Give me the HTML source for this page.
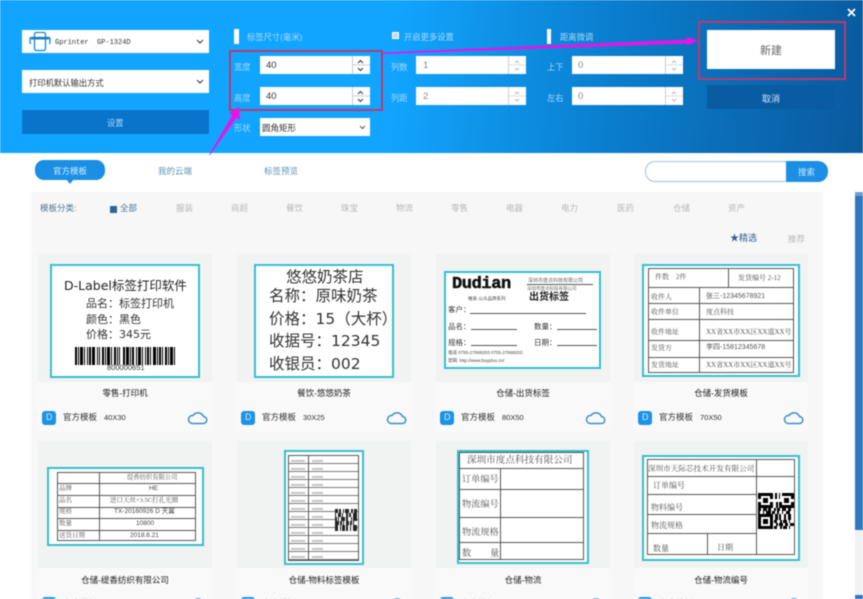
<!DOCTYPE html>
<html><head><meta charset="utf-8">
<style>
html,body{margin:0;padding:0;background:#fff}
#r{position:relative;width:863px;height:599px;overflow:hidden;background:#fff;font-family:"Liberation Sans","Noto Sans CJK SC",sans-serif;color:#333;filter:blur(.45px)}
#r div,#r svg{position:absolute;box-sizing:border-box}
.t{white-space:nowrap;line-height:1}
.hd{left:0;top:0;width:863px;height:153px;background:linear-gradient(94deg,#12a5ff 0%,#12a5ff 45%,#0a7ccb 72%,#0a5a9e 100%)}
.w{background:#fff}
.lb{color:#a6dafa;font-size:8.300px}
.sp{width:1px;background:#ccc}
.card{width:174px;background:#f9f9f9}
.im{left:0;top:0;width:174px;background:#f1f2f2}
.cap{width:174px;text-align:center;font-size:8.500px;color:#222}
.lbl{background:#fff;border:2px solid #35bfcf;overflow:hidden;color:#222}
.cat{font-size:8.500px;color:#b8b8b8;top:204px}
.ln{background:#555}
.dv{font-family:"DejaVu Sans","Noto Sans CJK SC",sans-serif}
.se{font-family:"Liberation Serif","Noto Serif CJK SC",serif;color:#555}
.ft{font-size:8.500px}
.ft span{font-size:7.500px;margin-left:7px}
.ic{width:14px;height:14px;border-radius:3px;background:#1d93e6}
</style></head><body>
<div id="r">
<div class="hd"></div>
<div class="w" style="left:22px;top:30px;width:187px;height:23px"></div>
<svg style="left:29px;top:31px" width="22" height="21" viewBox="0 0 22 21"><path d="M5.500 6V3.500Q5.500 1.500 7.500 1.500H14.500Q16.500 1.500 16.500 3.500V6" fill="none" stroke="#2b7fb8" stroke-width="1.300"/><path d="M2 12.500Q1 12.500 1 11V8Q1 6.500 2.500 6.500H19.500Q21 6.500 21 8V11Q21 12.500 20 12.500" fill="none" stroke="#2396e0" stroke-width="1.500"/><rect x="2" y="6" width="18" height="2.500" fill="#1f7fc0"/><path d="M5.500 8.500V17Q5.500 19.500 8 19.500H14Q16.500 19.500 16.500 17V8.500" fill="none" stroke="#2396e0" stroke-width="1.500"/></svg>
<div class="t" style="left:55px;top:39px;font:7px 'Liberation Mono',monospace;color:#333">Gprinter&nbsp;&nbsp;GP-1324D</div>
<svg style="left:196px;top:39px" width="8" height="6"><path d="M1 1l3 3 3-3" fill="none" stroke="#444" stroke-width="1.200"/></svg>
<div class="w" style="left:22px;top:70px;width:187px;height:23px"></div>
<div class="t" style="left:29px;top:79px;font-size:8.300px">打印机默认输出方式</div>
<svg style="left:196px;top:79px" width="8" height="6"><path d="M1 1l3 3 3-3" fill="none" stroke="#444" stroke-width="1.200"/></svg>
<div style="left:22px;top:110px;width:187px;height:24px;background:#0a74cb"></div>
<div class="t" style="left:107px;top:119px;font-size:8.300px;color:#a9d8f8">设置</div>

<div class="w" style="left:234px;top:29px;width:5px;height:15px"></div>
<div class="t lb" style="left:247px;top:33px">标签尺寸(毫米)</div>
<div style="left:392px;top:32px;width:7px;height:7px;background:#cfd8de;border:1px solid #fff"></div>
<div class="t lb" style="left:404px;top:33px">开启更多设置</div>
<div class="w" style="left:547px;top:29px;width:4px;height:15px"></div>
<div class="t lb" style="left:560px;top:33px">距离微调</div>

<div class="t lb" style="left:234px;top:63px">宽度</div>
<div class="t lb" style="left:234px;top:94px">高度</div>
<div class="t lb" style="left:234px;top:124px">形状</div>
<div class="w" style="left:260px;top:56px;width:110px;height:18px"></div>
<div class="t" style="left:266px;top:61px;font-size:9.500px">40</div>
<div class="sp" style="left:352px;top:56px;height:18px"></div>
<div class="w" style="left:260px;top:87px;width:110px;height:18px"></div>
<div class="t" style="left:266px;top:92px;font-size:9.500px">40</div>
<div class="sp" style="left:352px;top:87px;height:18px"></div>
<svg style="left:353px;top:56px" width="17" height="49"><path d="M5 7l2.500-2.500L10 7M5 12l2.500 2.500L10 12M5 38l2.500-2.500L10 38M5 43l2.500 2.500L10 43" fill="none" stroke="#333" stroke-width="1"/><path d="M0 9h17M0 40h17" stroke="#ccc"/></svg>
<div class="w" style="left:260px;top:118px;width:110px;height:18px"></div>
<div class="t" style="left:262px;top:124px;font-size:8.500px">圆角矩形</div>
<svg style="left:359px;top:125px" width="7" height="5"><path d="M1 1l2.500 2.500L6 1" fill="none" stroke="#555"/></svg>

<div class="t lb" style="left:391px;top:63px">列数</div>
<div class="t lb" style="left:391px;top:94px">列距</div>
<div class="w" style="left:416px;top:56px;width:110px;height:18px"></div>
<div class="t" style="left:423px;top:61px;font-size:9.500px;color:#888">1</div>
<div class="sp" style="left:508px;top:56px;height:18px"></div>
<div class="w" style="left:416px;top:87px;width:110px;height:18px"></div>
<div class="t" style="left:423px;top:92px;font-size:9.500px;color:#888">2</div>
<div class="sp" style="left:508px;top:87px;height:18px"></div>
<svg style="left:509px;top:56px" width="17" height="49"><path d="M6 7l2-2 2 2M6 12l2 2 2-2M6 38l2-2 2 2M6 43l2 2 2-2" fill="none" stroke="#bbb"/><path d="M0 9h17M0 40h17" stroke="#ddd"/></svg>

<div class="t lb" style="left:547px;top:63px">上下</div>
<div class="t lb" style="left:547px;top:94px">左右</div>
<div class="w" style="left:572px;top:56px;width:111px;height:18px"></div>
<div class="t" style="left:578px;top:61px;font-size:9.500px;color:#888">0</div>
<div class="sp" style="left:665px;top:56px;height:18px"></div>
<div class="w" style="left:572px;top:87px;width:111px;height:18px"></div>
<div class="t" style="left:578px;top:92px;font-size:9.500px;color:#888">0</div>
<div class="sp" style="left:665px;top:87px;height:18px"></div>
<svg style="left:666px;top:56px" width="17" height="49"><path d="M6 7l2-2 2 2M6 12l2 2 2-2M6 38l2-2 2 2M6 43l2 2 2-2" fill="none" stroke="#bbb"/><path d="M0 9h17M0 40h17" stroke="#ddd"/></svg>

<div class="w" style="left:707px;top:30px;width:128px;height:39px"></div>
<div class="t" style="left:760px;top:46px;font-size:11px;color:#666">新建</div>
<div style="left:707px;top:85px;width:128px;height:24px;background:#0a5ca2"></div>
<div class="t" style="left:762px;top:95px;font-size:9px;color:#cfe4f5">取消</div>
<svg style="left:846px;top:7px" width="12" height="12"><path d="M2 2l7 7M9 2l-7 7" stroke="#fff" stroke-width="1.800" fill="none"/></svg>

<div style="left:229px;top:50px;width:154px;height:61px;border:2px solid #b83a72"></div>
<div style="left:698px;top:21px;width:148px;height:59px;border:2px solid #b83a6c"></div>

<svg style="left:200px;top:30px" width="510" height="130" viewBox="200 30 510 130"><path d="M383 52.500L687 39.500V36.500L698 41 687 45.500V43.500L383 54Z" fill="#e615e6"/><path d="M209 155L232 115.500 229 113 239 107 240 120 236.500 118 210 155Z" fill="#e615e6"/></svg>

<div style="left:35px;top:160px;width:70px;height:20px;border-radius:9px;background:#1a8fe3"></div>
<div style="left:66px;top:179px;width:8px;height:5px;background:#1a8fe3;clip-path:polygon(0 0,100% 0,50% 100%)"></div>
<div class="t" style="left:53px;top:167px;font-size:8.500px;color:#d3ecfd">官方模板</div>
<div class="t" style="left:158px;top:167px;font-size:8.500px;color:#5f93b8">我的云端</div>
<div class="t" style="left:264px;top:167px;font-size:8.500px;color:#5f93b8">标签预览</div>
<div style="left:645px;top:161px;width:142px;height:21px;border:1px solid #9fc0d2;border-right:0;border-radius:10px 0 0 10px;background:#fff"></div>
<div style="left:786px;top:161px;width:42px;height:21px;border-radius:0 10px 10px 0;background:#1a8fe3"></div>
<div class="t" style="left:798px;top:168px;font-size:8.500px;color:#d3ecfd">搜索</div>

<div style="left:31px;top:192px;width:792px;height:407px;background:#f7f7f7"></div>
<div style="left:855px;top:192px;width:8px;height:4px;background:#6aa3d8"></div>
<div style="left:855px;top:196px;width:8px;height:334px;background:#2f78c0"></div>
<div style="left:855px;top:530px;width:8px;height:65px;background:#f2f2f2"></div>
<div style="left:855px;top:595px;width:8px;height:4px;background:#2f78c0"></div>

<div class="t" style="left:40px;top:204px;font-size:8.500px;color:#4e7590">模板分类:</div>
<div style="left:110px;top:206px;width:7px;height:7px;background:#2d6596"></div>
<div class="t" style="left:120px;top:204px;font-size:8.500px;color:#4e7590">全部</div>
<div class="t cat" style="left:176px">服装</div>
<div class="t cat" style="left:231px">商超</div>
<div class="t cat" style="left:286px">餐饮</div>
<div class="t cat" style="left:341px">珠宝</div>
<div class="t cat" style="left:396px">物流</div>
<div class="t cat" style="left:451px">零售</div>
<div class="t cat" style="left:506px">电器</div>
<div class="t cat" style="left:561px">电力</div>
<div class="t cat" style="left:617px">医药</div>
<div class="t cat" style="left:673px">仓储</div>
<div class="t cat" style="left:728px">资产</div>
<div class="t" style="left:730px;top:234px;font-size:9px;color:#2d5f92">★精选</div>
<div class="t" style="left:788px;top:235px;font-size:8.500px;color:#b8b8b8">推荐</div>

<!-- cards row 1 -->
<div class="card" style="left:38px;top:254px;height:178px"><div class="im" style="height:128px"></div></div>
<div class="card" style="left:237px;top:254px;height:178px"><div class="im" style="height:128px"></div></div>
<div class="card" style="left:436px;top:254px;height:178px"><div class="im" style="height:128px"></div></div>
<div class="card" style="left:634px;top:254px;height:178px"><div class="im" style="height:128px"></div></div>
<!-- cards row 2 -->
<div class="card" style="left:38px;top:441px;height:158px"><div class="im" style="height:127px"></div></div>
<div class="card" style="left:237px;top:441px;height:158px"><div class="im" style="height:127px"></div></div>
<div class="card" style="left:436px;top:441px;height:158px"><div class="im" style="height:127px"></div></div>
<div class="card" style="left:634px;top:441px;height:158px"><div class="im" style="height:127px"></div></div>

<!-- label 1 -->
<div class="lbl" style="left:50px;top:264px;width:150px;height:114px"></div>
<div class="t dv" style="left:64px;top:280px;font-size:12.500px;color:#222">D-Label标签打印软件</div>
<div class="t dv" style="left:86px;top:298px;font-size:11px">品名：标签打印机</div>
<div class="t dv" style="left:86px;top:314px;font-size:11px">颜色：黑色</div>
<div class="t dv" style="left:86px;top:329px;font-size:11px">价格：345元</div>
<svg style="left:75px;top:347px" width="102" height="18"><path d="M0 9H102" stroke="#000" stroke-width="18" stroke-dasharray="2 1 1 1 3 1 1 2 1 1 2 1 3 2 1 1 1 2 2 1 1 1 3 1 1 2 2 1 1 1 1 3 2 1 3 1 1 1 2 2 1 1 3 1 1 2 1 1 2 1 1 2 3 1 1 1 2 1 1 2"/></svg>
<div class="t" style="left:107px;top:364px;font-size:7.500px;color:#333">800000651</div>

<!-- label 2 -->
<div class="lbl" style="left:254px;top:264px;width:140px;height:114px"></div>
<div class="t dv" style="left:286px;top:270px;font-size:15.500px">悠悠奶茶店</div>
<div class="t dv" style="left:269px;top:289px;font-size:15.500px">名称：原味奶茶</div>
<div class="t dv" style="left:269px;top:312px;font-size:15.500px">价格：15（大杯）</div>
<div class="t dv" style="left:269px;top:334px;font-size:15.500px">收据号：12345</div>
<div class="t dv" style="left:269px;top:357px;font-size:15.500px">收银员：002</div>

<!-- label 3 -->
<div class="lbl" style="left:444px;top:271px;width:157px;height:98px"></div>
<div class="t" style="left:452px;top:275px;font:bold 17px 'Liberation Mono',monospace;color:#111;letter-spacing:-.4px;-webkit-text-stroke:.5px #111">Dudian</div>
<div class="t" style="left:468px;top:297px;font-size:4.500px;color:#444">唯美·公众品牌系列</div>
<div class="t" style="left:528px;top:279px;font-size:5px;color:#666">深圳市度点科技有限公司</div>
<div class="ln" style="left:527px;top:284px;width:66px;height:1px"></div>
<div class="t" style="left:527px;top:287px;font-size:4.500px;color:#666">深圳市度点科技有限公司</div>
<div class="t" style="left:529px;top:293px;font-size:10px;font-weight:bold;color:#222">出货标签</div>
<div class="t" style="left:448px;top:306px;font-size:7.500px">客户：</div>
<div class="ln" style="left:470px;top:313px;width:116px;height:1px"></div>
<div class="t" style="left:448px;top:323px;font-size:7.500px">品名：</div>
<div class="ln" style="left:471px;top:329px;width:46px;height:1px"></div>
<div class="t" style="left:534px;top:323px;font-size:7.500px">数量：</div>
<div class="ln" style="left:557px;top:329px;width:40px;height:1px"></div>
<div class="t" style="left:448px;top:339px;font-size:7.500px">规格：</div>
<div class="ln" style="left:471px;top:345px;width:46px;height:1px"></div>
<div class="t" style="left:534px;top:339px;font-size:7.500px">日期：</div>
<div class="ln" style="left:557px;top:345px;width:40px;height:1px"></div>
<div class="t" style="left:448px;top:351px;font-size:4.500px;color:#444">电话 0755-27668203 0755-27668203</div>
<div class="t" style="left:448px;top:359px;font-size:4.500px;color:#444">官网: http://www.buyplus.cn/</div>

<!-- label 4 -->
<div class="lbl" style="left:642px;top:264px;width:158px;height:113px"></div>
<div style="left:648px;top:268px;width:146px;height:105px;border:1px solid #555"></div>
<div class="ln" style="left:648px;top:287px;width:146px;height:1px"></div>
<div class="ln" style="left:648px;top:303px;width:146px;height:1px"></div>
<div class="ln" style="left:648px;top:319px;width:146px;height:1px"></div>
<div class="ln" style="left:648px;top:340px;width:146px;height:1px"></div>
<div class="ln" style="left:648px;top:357px;width:146px;height:1px"></div>
<div class="ln" style="left:728px;top:268px;width:1px;height:19px"></div>
<div class="ln" style="left:699px;top:287px;width:1px;height:86px"></div>
<div class="t se" style="left:655px;top:274px;font-size:7px">件数&nbsp;&nbsp;&nbsp;&nbsp;2件</div>
<div class="t se" style="left:738px;top:275px;font-size:7px">发货编号 2-12</div>
<div class="t se" style="left:651px;top:294px;font-size:7px">收件人</div>
<div class="t" style="left:706px;top:293px;font-size:7px;color:#555">张三-12345678921</div>
<div class="t se" style="left:651px;top:309px;font-size:7px">收件单位</div>
<div class="t se" style="left:706px;top:309px;font-size:7px">度点科技</div>
<div class="t se" style="left:651px;top:329px;font-size:7px">收件地址</div>
<div class="t se" style="left:706px;top:329px;font-size:7px">XX省XX市XX区XX道XX号</div>
<div class="t se" style="left:651px;top:345px;font-size:7px">发货方</div>
<div class="t" style="left:706px;top:344px;font-size:7px;color:#555">李四-15812345678</div>
<div class="t se" style="left:651px;top:362px;font-size:7px">发货地址</div>
<div class="t se" style="left:706px;top:362px;font-size:7px">XX省XX市XX区XX道XX号</div>

<!-- captions row 1 -->
<div class="t cap" style="left:38px;top:389px">零售-打印机</div>
<div class="t cap" style="left:237px;top:389px">餐饮-悠悠奶茶</div>
<div class="t cap" style="left:436px;top:389px">仓储-出货标签</div>
<div class="t cap" style="left:634px;top:389px">仓储-发货模板</div>
<!-- footers row 1 -->
<div class="ic" style="left:42px;top:411px"></div>
<div class="ic" style="left:241px;top:411px"></div>
<div class="ic" style="left:440px;top:411px"></div>
<div class="ic" style="left:638px;top:411px"></div>
<div class="t" style="left:46px;top:413px;font-size:9px;color:#cfe9fb">D</div>
<div class="t" style="left:245px;top:413px;font-size:9px;color:#cfe9fb">D</div>
<div class="t" style="left:444px;top:413px;font-size:9px;color:#cfe9fb">D</div>
<div class="t" style="left:642px;top:413px;font-size:9px;color:#cfe9fb">D</div>
<div class="t ft" style="left:63px;top:413px">官方模板<span>40X30</span></div>
<div class="t ft" style="left:262px;top:413px">官方模板<span>30X25</span></div>
<div class="t ft" style="left:461px;top:413px">官方模板<span>80X50</span></div>
<div class="t ft" style="left:659px;top:413px">官方模板<span>70X50</span></div>
<svg style="left:187px;top:410px" width="21" height="15" viewBox="0 0 21 15"><path d="M5 13.500h11a3.500 3.500 0 0 0 .5-7A6 6 0 0 0 6 5.500a4 4 0 0 0-1 8z" fill="none" stroke="#3a8fc8" stroke-width="1.500"/></svg>
<svg style="left:386px;top:410px" width="21" height="15" viewBox="0 0 21 15"><path d="M5 13.500h11a3.500 3.500 0 0 0 .5-7A6 6 0 0 0 6 5.500a4 4 0 0 0-1 8z" fill="none" stroke="#3a8fc8" stroke-width="1.500"/></svg>
<svg style="left:585px;top:410px" width="21" height="15" viewBox="0 0 21 15"><path d="M5 13.500h11a3.500 3.500 0 0 0 .5-7A6 6 0 0 0 6 5.500a4 4 0 0 0-1 8z" fill="none" stroke="#3a8fc8" stroke-width="1.500"/></svg>
<svg style="left:783px;top:410px" width="21" height="15" viewBox="0 0 21 15"><path d="M5 13.500h11a3.500 3.500 0 0 0 .5-7A6 6 0 0 0 6 5.500a4 4 0 0 0-1 8z" fill="none" stroke="#3a8fc8" stroke-width="1.500"/></svg>

<!-- label 5 -->
<div class="lbl" style="left:47px;top:467px;width:157px;height:79px"></div>
<div style="left:57px;top:472px;width:139px;height:69px;border:1px solid #555"></div>
<div class="ln" style="left:57px;top:483px;width:139px;height:1px"></div>
<div class="ln" style="left:57px;top:495px;width:139px;height:1px"></div>
<div class="ln" style="left:57px;top:507px;width:139px;height:1px"></div>
<div class="ln" style="left:57px;top:518px;width:139px;height:1px"></div>
<div class="ln" style="left:57px;top:530px;width:139px;height:1px"></div>
<div class="ln" style="left:99px;top:472px;width:1px;height:69px"></div>
<div class="t se" style="left:127px;top:475px;font-size:6.300px">缇香纺织有限公司</div>
<div class="t se" style="left:59px;top:486px;font-size:6.500px">品牌</div>
<div class="t" style="left:149px;top:486px;font-size:6.500px;color:#444">HE</div>
<div class="t se" style="left:59px;top:498px;font-size:6.500px">品名</div>
<div class="t se" style="left:110px;top:498px;font-size:6.500px">进口天丝+3.5C打孔光圈</div>
<div class="t se" style="left:59px;top:509px;font-size:6.500px">规格</div>
<div class="t" style="left:114px;top:509px;font-size:6.500px;color:#444">TX-20160926 D 天翼</div>
<div class="t se" style="left:59px;top:521px;font-size:6.500px">数量</div>
<div class="t" style="left:136px;top:521px;font-size:6.500px;color:#444">10800</div>
<div class="t se" style="left:59px;top:533px;font-size:6.500px">送货日期</div>
<div class="t" style="left:130px;top:533px;font-size:6.500px;color:#444">2018.6.21</div>

<!-- label 6 -->
<div class="lbl" style="left:284px;top:450px;width:80px;height:115px"></div>
<div style="left:288px;top:455px;width:71px;height:106px;border:1px solid #555;background:repeating-linear-gradient(180deg,#fff 0 7px,#777 7px 8px)"></div>
<div class="ln" style="left:308px;top:455px;width:1px;height:106px"></div>
<div style="left:312px;top:458px;width:11px;height:100px;background:repeating-linear-gradient(180deg,transparent 0 2px,#c4c4c4 2px 4px,transparent 4px 8px)"></div>
<div style="left:291px;top:458px;width:14px;height:100px;background:repeating-linear-gradient(180deg,transparent 0 2px,#c4c4c4 2px 4px,transparent 4px 8px)"></div>
<svg style="left:335px;top:509px" width="22" height="22" viewBox="0 0 22 22"><rect width="22" height="22" fill="#fff"/><g stroke="#222" stroke-width="2" fill="none"><path d="M0 1H22M0 3H22" stroke-dasharray="3 1 2 2 1 1 4 2 2 1 3"/><path d="M0 5H22M0 7H22" stroke-dasharray="1 2 3 1 1 3 2 1 2 2 4"/><path d="M0 9H22M0 11H22" stroke-dasharray="2 1 1 2 4 1 2 3 1 1 4"/><path d="M0 13H22M0 15H22" stroke-dasharray="4 1 2 1 1 2 3 1 2 1 1"/><path d="M0 17H22M0 19H22M0 21H22" stroke-dasharray="3 2 1 1 3 1 2 2 1 2 4"/></g></svg>

<!-- label 7 -->
<div class="lbl" style="left:457px;top:450px;width:132px;height:114px"></div>
<div style="left:459px;top:452px;width:125px;height:108px;border:1px solid #555"></div>
<div class="ln" style="left:459px;top:468px;width:125px;height:1px"></div>
<div class="ln" style="left:459px;top:489px;width:125px;height:1px"></div>
<div class="ln" style="left:459px;top:517px;width:125px;height:1px"></div>
<div class="ln" style="left:459px;top:542px;width:125px;height:1px"></div>
<div class="ln" style="left:500px;top:468px;width:1px;height:92px"></div>
<div class="t se" style="left:467px;top:456px;font-size:9.600px">深圳市度点科技有限公司</div>
<div class="t se" style="left:462px;top:475px;font-size:9.200px">订单编号</div>
<div class="t se" style="left:462px;top:500px;font-size:9.200px">物流编号</div>
<div class="t se" style="left:462px;top:528px;font-size:9.200px">物流规格</div>
<div class="t se" style="left:462px;top:549px;font-size:9.200px">数</div>
<div class="t se" style="left:490px;top:549px;font-size:9.200px">量</div>

<!-- label 8 -->
<div class="lbl" style="left:642px;top:455px;width:158px;height:106px"></div>
<div style="left:647px;top:459px;width:148px;height:96px;border:1px solid #555"></div>
<div class="ln" style="left:647px;top:476px;width:148px;height:1px"></div>
<div class="ln" style="left:647px;top:494px;width:110px;height:1px"></div>
<div class="ln" style="left:647px;top:514px;width:110px;height:1px"></div>
<div class="ln" style="left:647px;top:533px;width:110px;height:1px"></div>
<div class="ln" style="left:756px;top:459px;width:1px;height:96px"></div>
<div class="ln" style="left:707px;top:533px;width:1px;height:22px"></div>
<div class="t se" style="left:648px;top:465px;font-size:7.600px">深圳市天际芯技术开发有限公司</div>
<div class="t se" style="left:653px;top:482px;font-size:8px">订单编号</div>
<div class="t se" style="left:651px;top:504px;font-size:8px">物料编号</div>
<div class="t se" style="left:651px;top:522px;font-size:8px">物流规格</div>
<div class="t se" style="left:653px;top:545px;font-size:8px">数量</div>
<div class="t se" style="left:717px;top:544px;font-size:8px">日期</div>
<svg style="left:758px;top:493px" width="36" height="36" viewBox="0 0 36 36"><rect width="36" height="36" fill="#fff"/><g stroke="#000" stroke-width="3" fill="none"><path d="M0 1.500H36M0 4.500H36" stroke-dasharray="15 2 2 2 1 2 12"/><path d="M0 10.500H36M0 13.500H36" stroke-dasharray="15 3 2 1 15"/><path d="M0 16.500H36" stroke-dasharray="3 2 4 1 3 3 2 1 3 2 4 2 3 3"/><path d="M0 19.500H36" stroke-dasharray="2 3 1 2 5 1 3 2 2 3 1 3 4 4"/><path d="M0 22.500H36M0 25.500H36" stroke-dasharray="15 2 3 1 2 3 2 2 3 3"/><path d="M0 28.500H36M0 34.500H36" stroke-dasharray="15 1 3 3 2 1 4 2 1 4"/><path d="M0 31.500H36" stroke-dasharray="15 3 2 1 4 2 3 2 4"/></g><g fill="#fff"><rect x="3" y="3" width="9" height="9"/><rect x="24" y="3" width="9" height="9"/><rect x="3" y="24" width="9" height="9"/></g><g fill="#000"><rect x="5" y="5" width="5" height="5"/><rect x="26" y="5" width="5" height="5"/><rect x="5" y="26" width="5" height="5"/></g></svg>

<!-- captions row 2 -->
<div class="t cap" style="left:38px;top:576px">仓储-缇香纺织有限公司</div>
<div class="t cap" style="left:237px;top:576px">仓储-物料标签模板</div>
<div class="t cap" style="left:436px;top:576px">仓储-物流</div>
<div class="t cap" style="left:634px;top:576px">仓储-物流编号</div>
<!-- footers row 2, clipped by page bottom -->
<div class="ic" style="left:42px;top:597px"></div>
<div class="ic" style="left:241px;top:597px"></div>
<div class="ic" style="left:440px;top:597px"></div>
<div class="ic" style="left:638px;top:597px"></div>
<div class="t ft" style="left:63px;top:599px">官方模板</div>
<div class="t ft" style="left:262px;top:599px">官方模板</div>
<div class="t ft" style="left:461px;top:599px">官方模板</div>
<div class="t ft" style="left:659px;top:599px">官方模板</div>
<svg style="left:187px;top:596px" width="21" height="15" viewBox="0 0 21 15"><path d="M5 13.500h11a3.500 3.500 0 0 0 .5-7A6 6 0 0 0 6 5.500a4 4 0 0 0-1 8z" fill="none" stroke="#3a8fc8" stroke-width="1.500"/></svg>
<svg style="left:386px;top:596px" width="21" height="15" viewBox="0 0 21 15"><path d="M5 13.500h11a3.500 3.500 0 0 0 .5-7A6 6 0 0 0 6 5.500a4 4 0 0 0-1 8z" fill="none" stroke="#3a8fc8" stroke-width="1.500"/></svg>
<svg style="left:585px;top:596px" width="21" height="15" viewBox="0 0 21 15"><path d="M5 13.500h11a3.500 3.500 0 0 0 .5-7A6 6 0 0 0 6 5.500a4 4 0 0 0-1 8z" fill="none" stroke="#3a8fc8" stroke-width="1.500"/></svg>
<svg style="left:783px;top:596px" width="21" height="15" viewBox="0 0 21 15"><path d="M5 13.500h11a3.500 3.500 0 0 0 .5-7A6 6 0 0 0 6 5.500a4 4 0 0 0-1 8z" fill="none" stroke="#3a8fc8" stroke-width="1.500"/></svg>
</div>
</body></html>
